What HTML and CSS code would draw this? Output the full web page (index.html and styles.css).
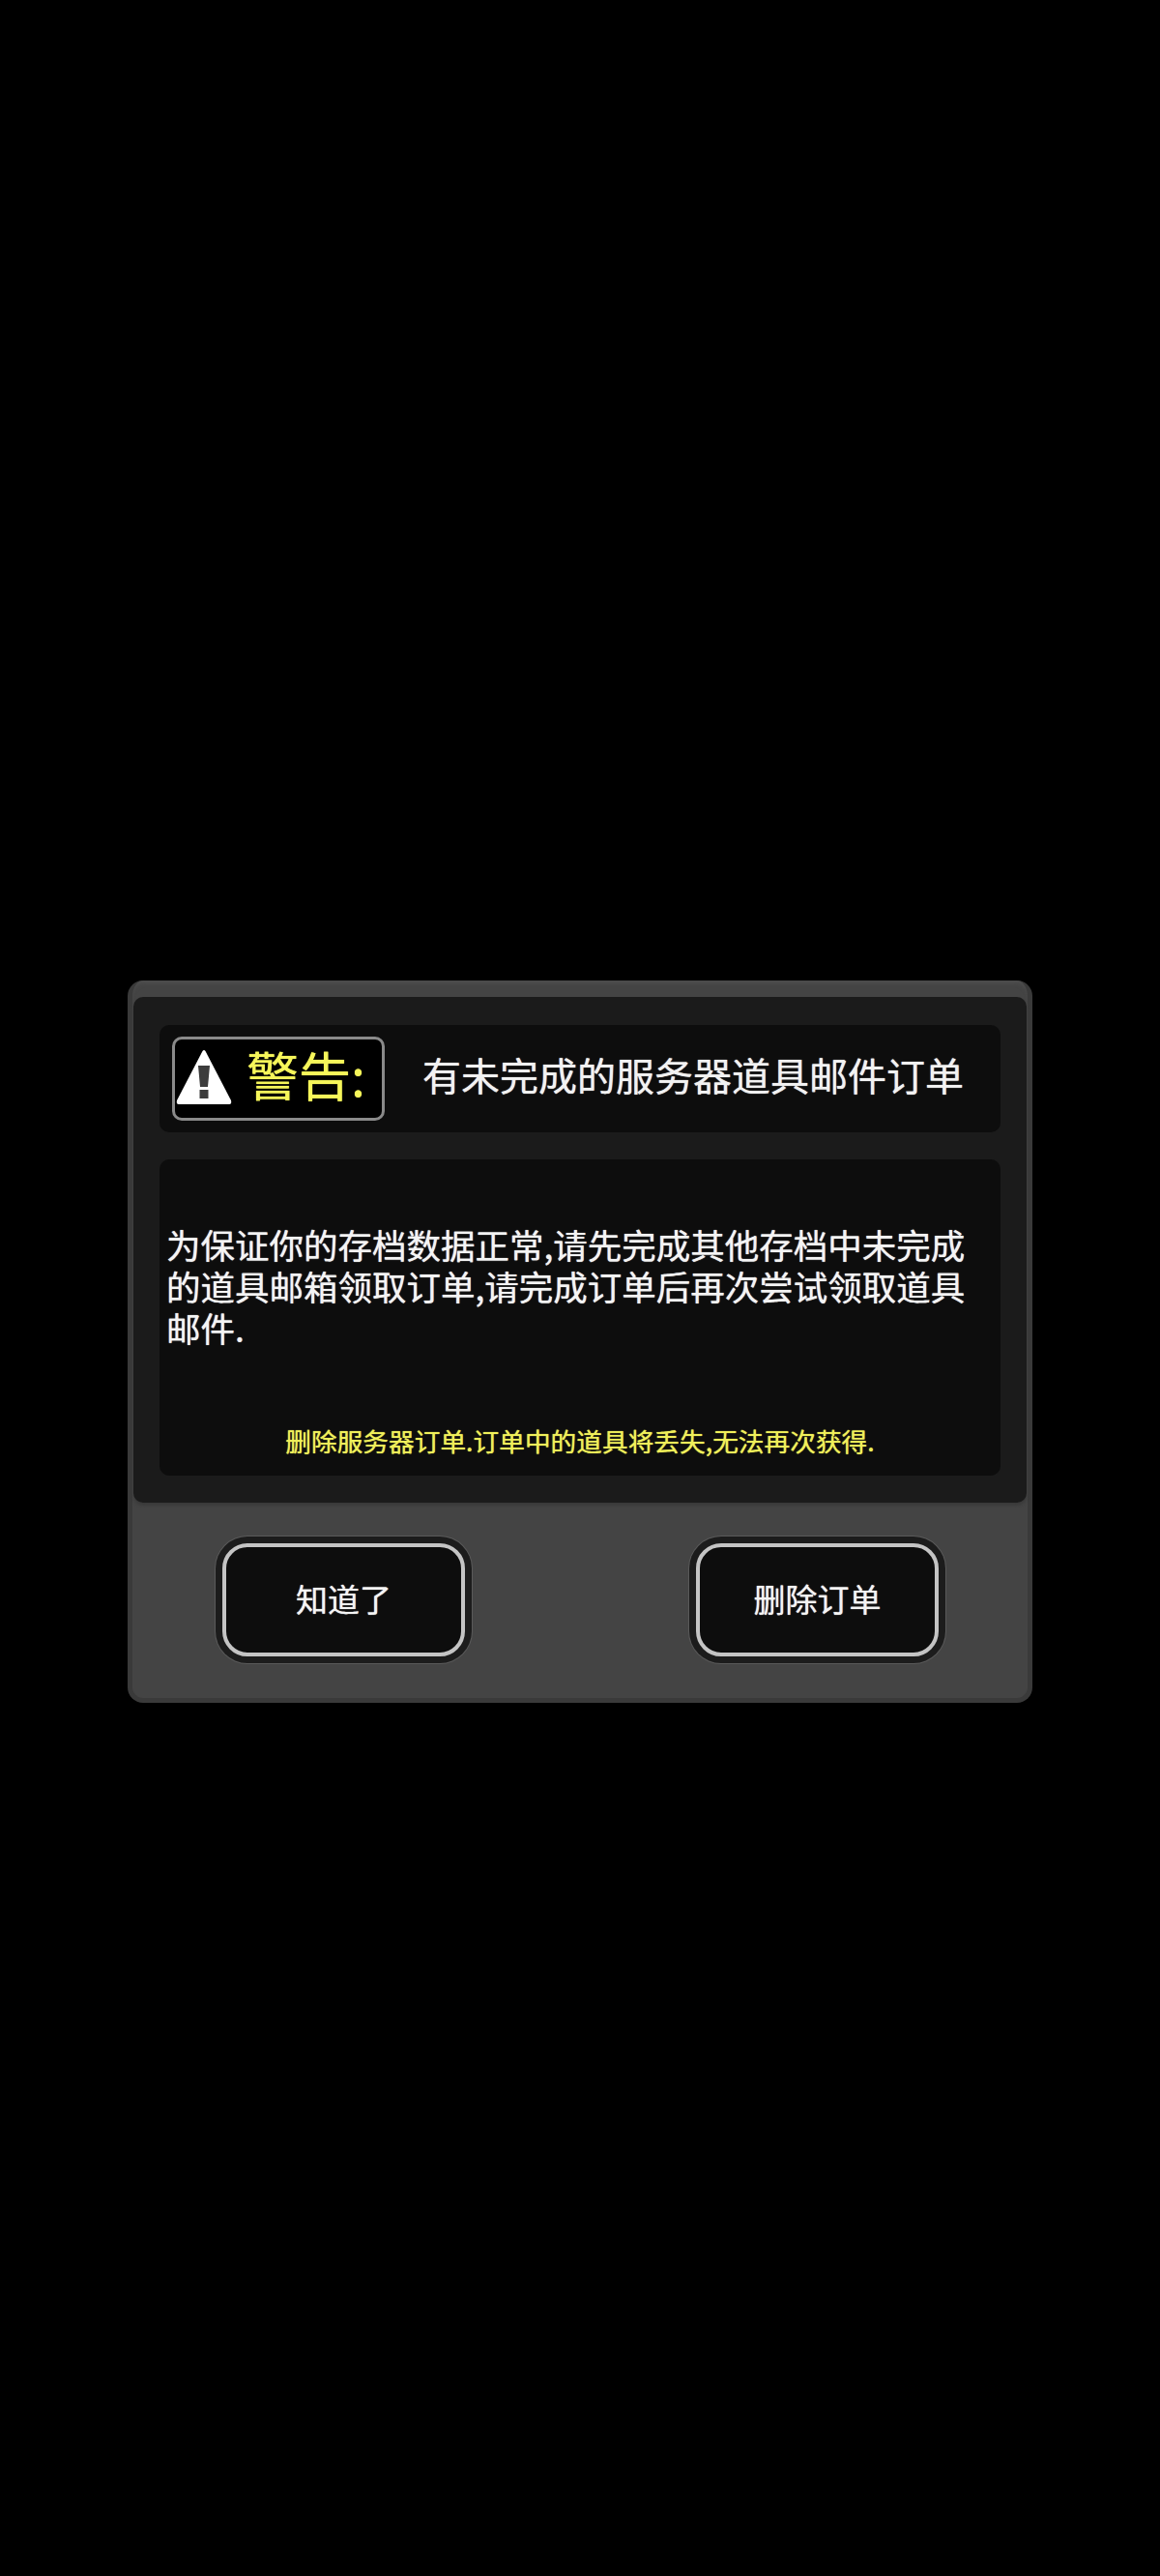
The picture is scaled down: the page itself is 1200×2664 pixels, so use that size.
FILE: index.html
```html
<!DOCTYPE html>
<html lang="zh">
<head>
    <meta charset="UTF-8">
    <meta name="viewport" content="width=device-width, initial-scale=1.0">
    <title>警告</title>
    <link rel="stylesheet" href="styles.css">
</head>
<body>
    <div class="dialog">
        <div class="dialog-main">
            <!-- 标题栏 -->
            <div class="title-box">
                <div class="warn-badge">
                    <svg class="warn-icon" viewBox="0 0 58 58" width="58" height="58">
                        <path d="M27.5 2Q29 0 30.5 2L57 53Q58 57 55 57H3Q0 57 1 53Z" fill="#ffffff"/>
                        <path d="M23 17H35L33 39H25Z" fill="#3c3c3c"/>
                        <rect x="24.5" y="42" width="9" height="9" fill="#3c3c3c"/>
                    </svg>
                    <span class="warn-label">警告:</span>
                </div>
                <div class="title-text">有未完成的服务器道具邮件订单</div>
            </div>
            <!-- 正文 -->
            <div class="message-box">
                <p class="message-text">为保证你的存档数据正常,请先完成其他存档中未完成的道具邮箱领取订单,请完成订单后再次尝试领取道具邮件.</p>
                <p class="hint-text">删除服务器订单.订单中的道具将丢失,无法再次获得.</p>
            </div>
        </div>
        <div class="dialog-buttons">
            <button class="game-btn">知道了</button>
            <button class="game-btn">删除订单</button>
        </div>
    </div>
</body>
</html>
```

FILE: styles.css
```css
* {
    margin: 0;
    padding: 0;
    box-sizing: border-box;
    font-family: "Noto Sans CJK SC", "Noto Sans", sans-serif;
}

body {
    background: #000000;
    min-height: 2664px;
    padding: 1014px 132px 0;
    color: #ffffff;
}

/* 弹窗外框 */
.dialog {
    height: 747px;
    background: #444444;
    border: 5px solid #3a3a3a;
    border-top: 0;
    border-radius: 16px;
    box-shadow: inset 0 5px 4px -2px #4e4e4e;
    padding-top: 17px;
}

.dialog-main {
    height: 523px;
    margin: 0 1px;
    padding: 29px 27px 28px;
    background: #1b1b1b;
    border-radius: 10px;
    box-shadow: 0 3px 3px #3a3a3a;
}

.title-box {
    height: 111px;
    display: flex;
    align-items: center;
    padding-left: 13px;
    background: #0d0d0d;
    border-radius: 10px;
}

.warn-badge {
    width: 220px;
    height: 87px;
    display: flex;
    align-items: center;
    padding-left: 1px;
    background: #000000;
    border: 3px solid #8a8a8a;
    border-radius: 10px;
}

.warn-icon {
    flex-shrink: 0;
    margin-bottom: 3px;
}

.warn-label {
    margin-left: 15px;
    margin-bottom: 10px;
    font-size: 54px;
    line-height: 1;
    color: #f6f65a;
    white-space: nowrap;
    text-shadow: 0 0 1px #f6f65a;
}

.title-text {
    margin-left: 39px;
    margin-bottom: 10px;
    font-size: 40px;
    white-space: nowrap;
    color: #f2f2f2;
    text-shadow: 0 0 1px #f2f2f2;
}

.message-box {
    height: 327px;
    margin-top: 28px;
    padding: 66px 7px 18px;
    display: flex;
    flex-direction: column;
    justify-content: space-between;
    background: #0d0d0d;
    border-radius: 10px;
}

.message-text {
    font-size: 35.5px;
    line-height: 43px;
    color: #f4f4f4;
    text-shadow: 0 0 1px #f4f4f4;
}

.hint-text {
    font-size: 26.7px;
    line-height: 36px;
    text-align: center;
    color: #f0f05a;
    text-shadow: 0 0 1px #f0f05a;
}

/* 底部按钮 */
.dialog-buttons {
    display: flex;
    justify-content: space-between;
    padding: 42px 92px 0 93px;
}

.game-btn {
    width: 251px;
    height: 117px;
    padding-bottom: 4px;
    background: #0d0d0d;
    border: 4px solid #c4c4c4;
    border-radius: 26px;
    box-shadow: 0 0 0 7px #1c1c1c, 0 0 0 8px #5a5a5a;
    color: #f4f4f4;
    font-size: 33px;
    cursor: pointer;
    text-shadow: 0 0 1px #f4f4f4;
}
```
